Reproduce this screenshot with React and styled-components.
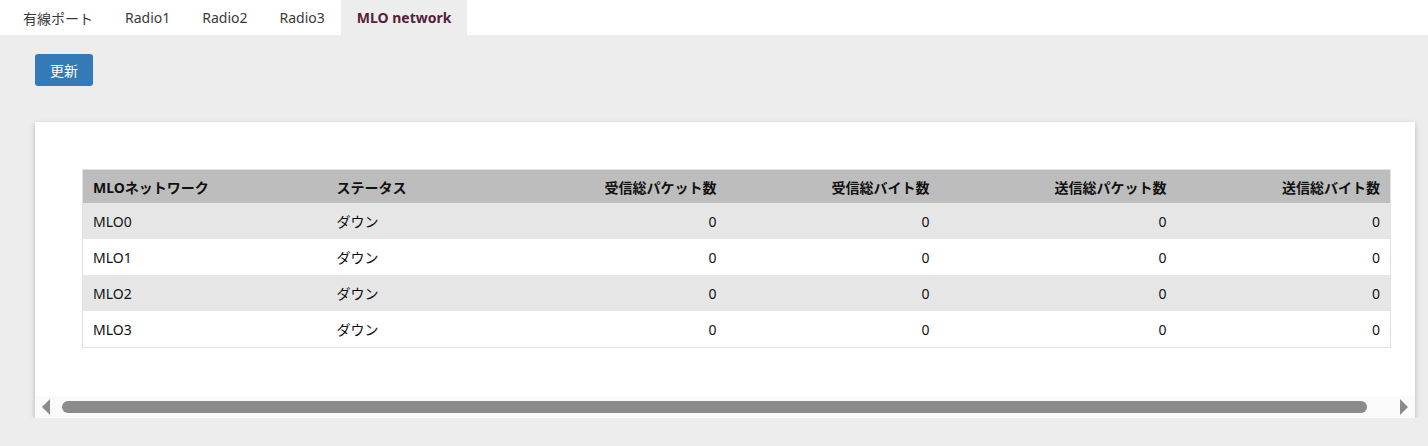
import styled, { createGlobalStyle } from 'styled-components'

const Global = createGlobalStyle`
body {
  margin: 0;
  background: #ededed;
  font-family: "Noto Sans", "Noto Sans CJK JP", sans-serif;
  font-size: 14px;
  color: #111;
}
`

const TabBar = styled.div`
display: flex;
height: 35px;
background: #fff;
padding-left: 7px;
`

const Tab = styled.div`
display: flex;
align-items: center;
padding: 0 16px;
font-size: 14px;
color: ${p => p.active ? '#55203a' : '#3a3a3a'};
font-weight: ${p => p.active ? 700 : 400};
background: ${p => p.active ? '#ededed' : '#fff'};
`

const Page = styled.div`
padding: 19px 13px 0 35px;
`

const Button = styled.button`
display: block;
width: 58px;
height: 32px;
border: none;
border-radius: 3px;
background: #337ab7;
color: #fff;
font-family: inherit;
font-size: 14px;
`

const Card = styled.div`
margin-top: 36px;
background: #fff;
box-shadow: 0 2px 5px rgba(0,0,0,0.25);
`

const Inner = styled.div`
padding: 47px 25px 48px 47px;
`

const Table = styled.table`
width: 1308px;
border-collapse: collapse;
border: 1px solid #e2e2e2;
table-layout: fixed;
`

const Th = styled.th`
height: 33px;
padding: 0 10px;
background: #bdbdbd;
font-weight: 700;
text-align: ${p => p.right ? 'right' : 'left'};
`

const Tr = styled.tr`
background: ${p => p.odd ? '#fff' : '#e6e6e6'};
`

const Td = styled.td`
height: 36px;
padding: 0 10px;
text-align: ${p => p.right ? 'right' : 'left'};
`

const Scroll = styled.div`
display: flex;
align-items: center;
height: 22px;
background: #fafafa;
padding: 0 7px;
`

const Arrow = styled.div`
width: 0;
height: 0;
border-top: 8px solid transparent;
border-bottom: 8px solid transparent;
${p => p.right ? 'border-left: 8px solid #8b8b8b;' : 'border-right: 8px solid #8b8b8b;'}
`

const Track = styled.div`
flex: 1;
padding: 0 33px 0 12px;
`

const Thumb = styled.div`
height: 12px;
border-radius: 6px;
background: #8b8b8b;
`

const cols = [244, 170, 230, 213, 237, 214]
const heads = ['MLOネットワーク', 'ステータス', '受信総パケット数', '受信総バイト数', '送信総パケット数', '送信総バイト数']
const rows = ['MLO0', 'MLO1', 'MLO2', 'MLO3']

export default function App() {
  return (
    <>
      <Global />
      <TabBar>
        <Tab>有線ポート</Tab>
        <Tab>Radio1</Tab>
        <Tab>Radio2</Tab>
        <Tab>Radio3</Tab>
        <Tab active>MLO network</Tab>
      </TabBar>
      <Page>
        <Button>更新</Button>
        <Card>
          <Inner>
            <Table>
              <colgroup>
                {cols.map((w, i) => <col key={i} style={{ width: w }} />)}
              </colgroup>
              <thead>
                <tr>
                  {heads.map((h, i) => <Th key={h} right={i > 1}>{h}</Th>)}
                </tr>
              </thead>
              <tbody>
                {rows.map((r, i) => (
                  <Tr key={r} odd={i % 2 === 1}>
                    <Td>{r}</Td>
                    <Td>ダウン</Td>
                    <Td right>0</Td>
                    <Td right>0</Td>
                    <Td right>0</Td>
                    <Td right>0</Td>
                  </Tr>
                ))}
              </tbody>
            </Table>
          </Inner>
          <Scroll>
            <Arrow />
            <Track><Thumb /></Track>
            <Arrow right />
          </Scroll>
        </Card>
      </Page>
    </>
  )
}
